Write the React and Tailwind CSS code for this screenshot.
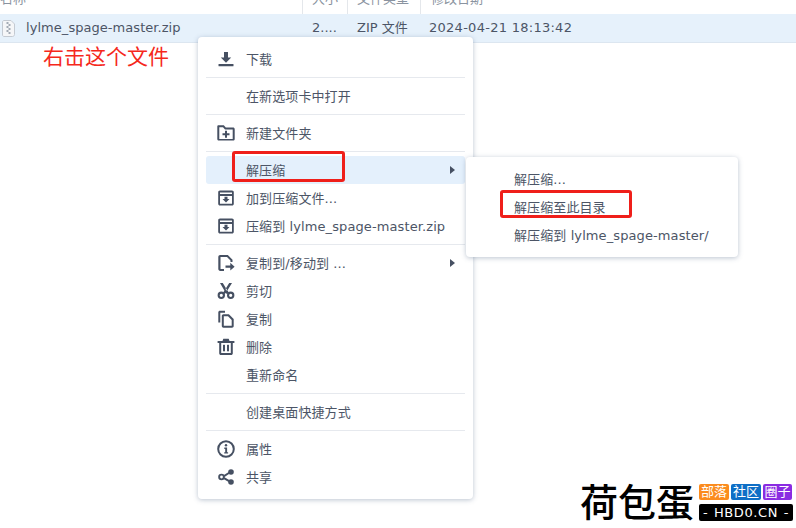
const FONT = "font-['DejaVu_Sans','Noto_Sans_CJK_SC',sans-serif]";

const Ico = ({ children }) => (
  <svg width="20" height="20" viewBox="0 0 20 20" className="absolute left-[10px] top-1/2 -translate-y-1/2 text-[#465062]" fill="currentColor">
    {children}
  </svg>
);

const Download = () => (
  <Ico>
    <path d="M8 3h4v5.500h3.200L10 13.800 4.800 8.500H8z" />
    <rect x="2.500" y="15" width="15" height="2.200" rx="0.500" />
  </Ico>
);
const FolderPlus = () => (
  <Ico>
    <path fillRule="evenodd" d="M2.500 2.300h5.300l2 2.200h7.200c1 0 1.700.7 1.700 1.700v9.700c0 1-.7 1.700-1.700 1.700H3c-1 0-1.700-.7-1.700-1.700V3.500c0-.7.500-1.200 1.200-1.200zm.8 2v11.600h13.400V6.500H9l-2-2.200z" />
    <path d="M9 7.800h2v2.500h2.500v2H11v2.500H9v-2.500H6.500v-2H9z" />
  </Ico>
);
const Archive = () => (
  <Ico>
    <path fillRule="evenodd" d="M4 2.500h12c1.100 0 1.800.7 1.800 1.800v11.400c0 1.100-.7 1.800-1.800 1.800H4c-1.100 0-1.800-.7-1.800-1.800V4.300c0-1.100.7-1.800 1.800-1.800zm0 5.400v7.900h12V7.900zm0-3.500v1.600h12V4.400z" />
    <path d="M8.500 8.700h3v2.300h2L10 14.500 6.500 11h2z" />
  </Ico>
);
const CopyMove = () => (
  <Ico>
    <path d="M4.200 2h7.600l4.700 4.700V9h-2V7.600L11 4H4.500v12H8v2H4.200c-1.100 0-1.900-.8-1.900-1.900V3.900C2.300 2.800 3.100 2 4.200 2z" />
    <path d="M14.300 9.800l4.300 3.900-4.300 3.900v-2.800H9.500v-2.200h4.800z" />
  </Ico>
);
const Cut = () => (
  <Ico>
    <path fillRule="evenodd" d="M5.300 10.600a3.700 3.700 0 1 1 0 7.400 3.700 3.700 0 0 1 0-7.400zm0 2.100a1.600 1.600 0 1 0 0 3.200 1.600 1.600 0 0 0 0-3.200zM14.700 10.600a3.700 3.700 0 1 1 0 7.400 3.700 3.700 0 0 1 0-7.400zm0 2.100a1.600 1.600 0 1 0 0 3.200 1.600 1.600 0 0 0 0-3.200z" />
    <path d="M4 2h2.800l5 8.300-1.400 2.700zM16 2h-2.800L9.500 8l1.400 2.300z" />
    <path d="M7 11.800l1.500-2.400 3 0 1.500 2.400-1.600 1.200L10 11.800 8.600 13z" />
  </Ico>
);
const Copy = () => (
  <Ico>
    <path d="M3.900 1.700H9v2H4.300v9.700h-2V3.300c0-.9.700-1.600 1.600-1.600z" />
    <path fillRule="evenodd" d="M7.500 5.300h5.400l4.800 4.700v7c0 1-.7 1.700-1.700 1.700H7.500c-1 0-1.700-.7-1.700-1.700V7c0-1 .7-1.700 1.700-1.700zm.3 2v9.400h7.900v-5.800l-3.700-3.600z" />
  </Ico>
);
const Trash = () => (
  <Ico>
    <path fillRule="evenodd" d="M7.300 1.800h5.400l.8 2.200h4.900v2h-1.600v10.200c0 1.100-.7 1.800-1.800 1.800H5c-1.100 0-1.800-.7-1.800-1.800V6H1.600V4h4.900zM5.200 6v10h9.600V6z" />
    <rect x="7" y="7.800" width="2" height="6.500" />
    <rect x="11" y="7.800" width="2" height="6.500" />
  </Ico>
);
const Info = () => (
  <Ico>
    <path fillRule="evenodd" d="M10 1.200a8.800 8.800 0 1 1 0 17.600 8.800 8.800 0 0 1 0-17.600zm0 2a6.800 6.800 0 1 0 0 13.600 6.800 6.800 0 0 0 0-13.600z" />
    <circle cx="10" cy="6.300" r="1.200" />
    <path d="M8.300 8.600h2.800v4.700h1v1.300H8.200v-1.300h1V9.900h-.9z" />
  </Ico>
);
const Share = () => (
  <Ico>
    <path fillRule="evenodd" d="M5.500 6.700a3.300 3.300 0 1 1 0 6.600 3.300 3.300 0 0 1 0-6.600zm0 1.900a1.400 1.400 0 1 0 0 2.800 1.400 1.400 0 0 0 0-2.800z" />
    <circle cx="15" cy="5" r="2.800" />
    <circle cx="15" cy="15" r="2.800" />
    <path d="M7.500 8.300l6-3.800 1 1.600-6 3.800zM8.500 10.300l6 3.500-1 1.700-6-3.500z" />
  </Ico>
);

const Divider = () => <div className="my-1 h-px bg-[#e6e9ee]" />;

const Arrow = () => (
  <span className="absolute right-[10px] top-1/2 -translate-y-1/2 border-y-[4px] border-l-[5px] border-y-transparent border-l-[#465062]" />
);

const Row = ({ icon, label, active, arrow, sub }) => (
  <div className={`relative flex h-7 items-center rounded-[3px] pt-[1px] text-[13px] tracking-[0.1px] text-[#4c5566] ${sub ? "pl-[48px]" : "pl-[40px]"} ${active ? "bg-[#e4f0fc]" : ""}`}>
    {icon}
    <span className="whitespace-pre">{label}</span>
    {arrow && <Arrow />}
  </div>
);

const Menu = () => (
  <div className="absolute left-[198px] top-[37px] w-[275px] rounded-[4px] bg-white px-2 py-2 shadow-[0_1px_5px_rgba(60,85,120,0.35)]">
    <Row icon={<Download />} label="下载" />
    <Divider />
    <Row label="在新选项卡中打开" />
    <Divider />
    <Row icon={<FolderPlus />} label="新建文件夹" />
    <Divider />
    <Row label="解压缩" active arrow />
    <Row icon={<Archive />} label="加到压缩文件..." />
    <Row icon={<Archive />} label="压缩到 lylme_spage-master.zip" />
    <Divider />
    <Row icon={<CopyMove />} label="复制到/移动到 ..." arrow />
    <Row icon={<Cut />} label="剪切" />
    <Row icon={<Copy />} label="复制" />
    <Row icon={<Trash />} label="删除" />
    <Row label="重新命名" />
    <Divider />
    <Row label="创建桌面快捷方式" />
    <Divider />
    <Row icon={<Info />} label="属性" />
    <Row icon={<Share />} label="共享" />
  </div>
);

const SubMenu = () => (
  <div className="absolute left-[466px] top-[157px] w-[272px] rounded-[4px] bg-white py-2 shadow-[0_1px_5px_rgba(60,85,120,0.35)]">
    <Row sub label="解压缩..." />
    <Row sub label="解压缩至此目录" />
    <Row sub label="解压缩到 lylme_spage-master/" />
  </div>
);

const ZipIcon = () => (
  <svg width="13" height="17" viewBox="0 0 13 17" className="ml-[2px] mr-[11px] shrink-0">
    <path d="M2 .500h7l3.500 3.500v10.500c0 1.100-.9 2-2 2H2c-.8 0-1.500-.7-1.500-1.500V2c0-.8.700-1.500 1.500-1.500z" fill="#f5f6f8" stroke="#c4cad2" />
    <path d="M4.500 2h2v2h-2zM6.500 4h2v2h-2zM4.500 6h2v2h-2zM6.500 8h2v2h-2zM4.500 10h2v2h-2zM6.500 12h2v2h-2z" fill="#a4abb5" />
  </svg>
);

const HeadCell = ({ className, children }) => (
  <div className={`flex h-[14px] items-end overflow-hidden border-r border-[#e4e7eb] ${className}`}>
    <span className="mb-[5px] whitespace-nowrap text-[13px] leading-[20px] text-[#8a93a0]">{children}</span>
  </div>
);

export default function App() {
  return (
    <div className={`relative h-[528px] w-[796px] overflow-hidden bg-white ${FONT}`}>
      <div className="flex h-[14px]">
        <HeadCell className="w-[303px]">名称</HeadCell>
        <HeadCell className="w-[45px] pl-[9px]">大小</HeadCell>
        <HeadCell className="w-[73px] pl-[9px]">文件类型</HeadCell>
        <HeadCell className="flex-1 border-r-0 pl-[10px]">修改日期</HeadCell>
      </div>
      <div className="flex h-[29px] items-center border-b border-[#dce6f0] bg-[#e6f1fb] text-[13px] text-[#4c5566]">
        <div className="flex w-[303px] items-center">
          <ZipIcon />
          <span className="tracking-[0.05px]">lylme_spage-master.zip</span>
        </div>
        <div className="w-[45px] pl-[9px]">2....</div>
        <div className="w-[73px] pl-[9px]">ZIP 文件</div>
        <div className="flex-1 pl-[8px] tracking-[0.27px]">2024-04-21 18:13:42</div>
      </div>
      <div className="pl-[43px] text-[21px] leading-[28px] text-[#f5281c]">右击这个文件</div>

      <Menu />
      <SubMenu />

      <div className="absolute left-[232px] top-[151px] h-[31px] w-[113px] rounded-[3px] border-[3px] border-[#ef1f1a]" />
      <div className="absolute left-[500px] top-[190px] h-[28px] w-[132px] rounded-[3px] border-[3px] border-[#ef1f1a]" />

      <div className="absolute left-[580px] top-[483px] flex items-start gap-[5px] bg-white pr-[4px]">
        <div className="mt-[-3px] whitespace-nowrap text-[38px] font-medium leading-[46px] text-black">荷包蛋</div>
        <div className="flex w-[94px] flex-col gap-[4px] pt-[1px]">
          <div className="flex gap-[2px] text-[13px] leading-[16px] text-white">
            <div className="flex h-[16px] w-[30px] items-center justify-center rounded-[2px] bg-[#fb8c1e]">部落</div>
            <div className="flex h-[16px] w-[30px] items-center justify-center rounded-[2px] bg-[#0f6fc6]">社区</div>
            <div className="flex h-[16px] w-[29px] items-center justify-center rounded-[2px] bg-[#8a2be2]">圈子</div>
          </div>
          <div className="flex h-[17px] items-center justify-between rounded-[2px] bg-black px-[4px] text-[13px] leading-none tracking-[0.6px] text-white">
            <span>-</span>
            <span>HBD0.CN</span>
            <span>-</span>
          </div>
        </div>
      </div>
    </div>
  );
}
